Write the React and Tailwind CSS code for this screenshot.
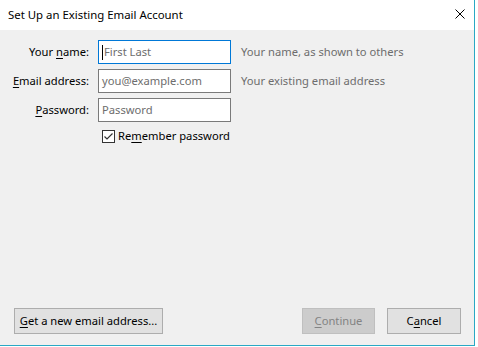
import React from "react";

const font = { fontFamily: "'Noto Sans', 'Open Sans', sans-serif" };

function Key({ children }) {
  return <span className="underline underline-offset-2">{children}</span>;
}

function Field({ label, placeholder, hint, focused }) {
  return (
    <>
      <label className="h-[24px] flex items-center justify-end text-black whitespace-nowrap">
        <span>{label}</span>
      </label>
      <div
        className={
          "h-[24px] bg-white border flex items-center px-[3px] " +
          (focused ? "border-[#0078d7]" : "border-[#7a7a7a]")
        }
      >
        {focused && <span className="w-px h-[15px] bg-black mr-[1px]" />}
        <span className="text-[#6d6d6d] whitespace-nowrap">{placeholder}</span>
      </div>
      <div className="h-[24px] flex items-center text-[#6d6d6d] pl-[1px] whitespace-nowrap">{hint}</div>
    </>
  );
}

export default function App() {
  return (
    <div className="w-[478px] h-[347px] bg-white overflow-hidden text-[11.2px]" style={font}>
      <div className="w-[475px] h-[346px] flex flex-col border-r border-b border-[#2aa8c4]">
        {/* Title bar */}
        <div className="h-[30px] bg-white flex items-center justify-between pl-[8px] pr-[9px]">
          <span className="text-black text-[11.4px]">Set Up an Existing Email Account</span>
          <svg width="10" height="10" viewBox="0 0 10 10" className="mb-[3px]">
            <path d="M0.5 0.5 L9.5 9.5 M9.5 0.5 L0.5 9.5" stroke="#000" strokeWidth="1" />
          </svg>
        </div>

        {/* Content */}
        <div className="flex-1 bg-[#f0f0f0] flex flex-col pt-[10px] pb-[11px] pl-[14px] pr-[13px]">
          <div className="grid grid-cols-[75px_133px_auto] gap-x-[9px] gap-y-[5px] items-center">
            <Field
              label={<>Your <Key>n</Key>ame:</>}
              placeholder="First Last"
              hint="Your name, as shown to others"
              focused
            />
            <Field
              label={<><Key>E</Key>mail address:</>}
              placeholder="you@example.com"
              hint="Your existing email address"
            />
            <Field label={<><Key>P</Key>assword:</>} placeholder="Password" />
            <div />
            <div className="flex items-center gap-[3px] pl-[4px] pt-[1px]">
              <span className="w-[13px] h-[13px] bg-white border border-[#333] flex items-center justify-center">
                <svg width="11" height="11" viewBox="0 0 11 11">
                  <path d="M1.5 5.5 L4 8 L9.5 2.5" fill="none" stroke="#333" strokeWidth="1.2" />
                </svg>
              </span>
              <span className="text-black whitespace-nowrap">
                Re<Key>m</Key>ember password
              </span>
            </div>
            <div />
          </div>

          <div className="flex-1" />

          <div className="flex items-center">
            <button className="h-[26px] w-[149px] bg-[#e1e1e1] border border-[#adadad] text-black whitespace-nowrap">
              <Key>G</Key>et a new email address...
            </button>
            <div className="flex-1" />
            <button className="h-[26px] w-[73px] bg-[#cccccc] border border-[#bfbfbf] text-[#838383] whitespace-nowrap">
              <Key>C</Key>ontinue
            </button>
            <button className="h-[26px] w-[74px] ml-[12px] bg-[#e1e1e1] border border-[#adadad] text-black whitespace-nowrap">
              C<Key>a</Key>ncel
            </button>
          </div>
        </div>
      </div>
    </div>
  );
}
